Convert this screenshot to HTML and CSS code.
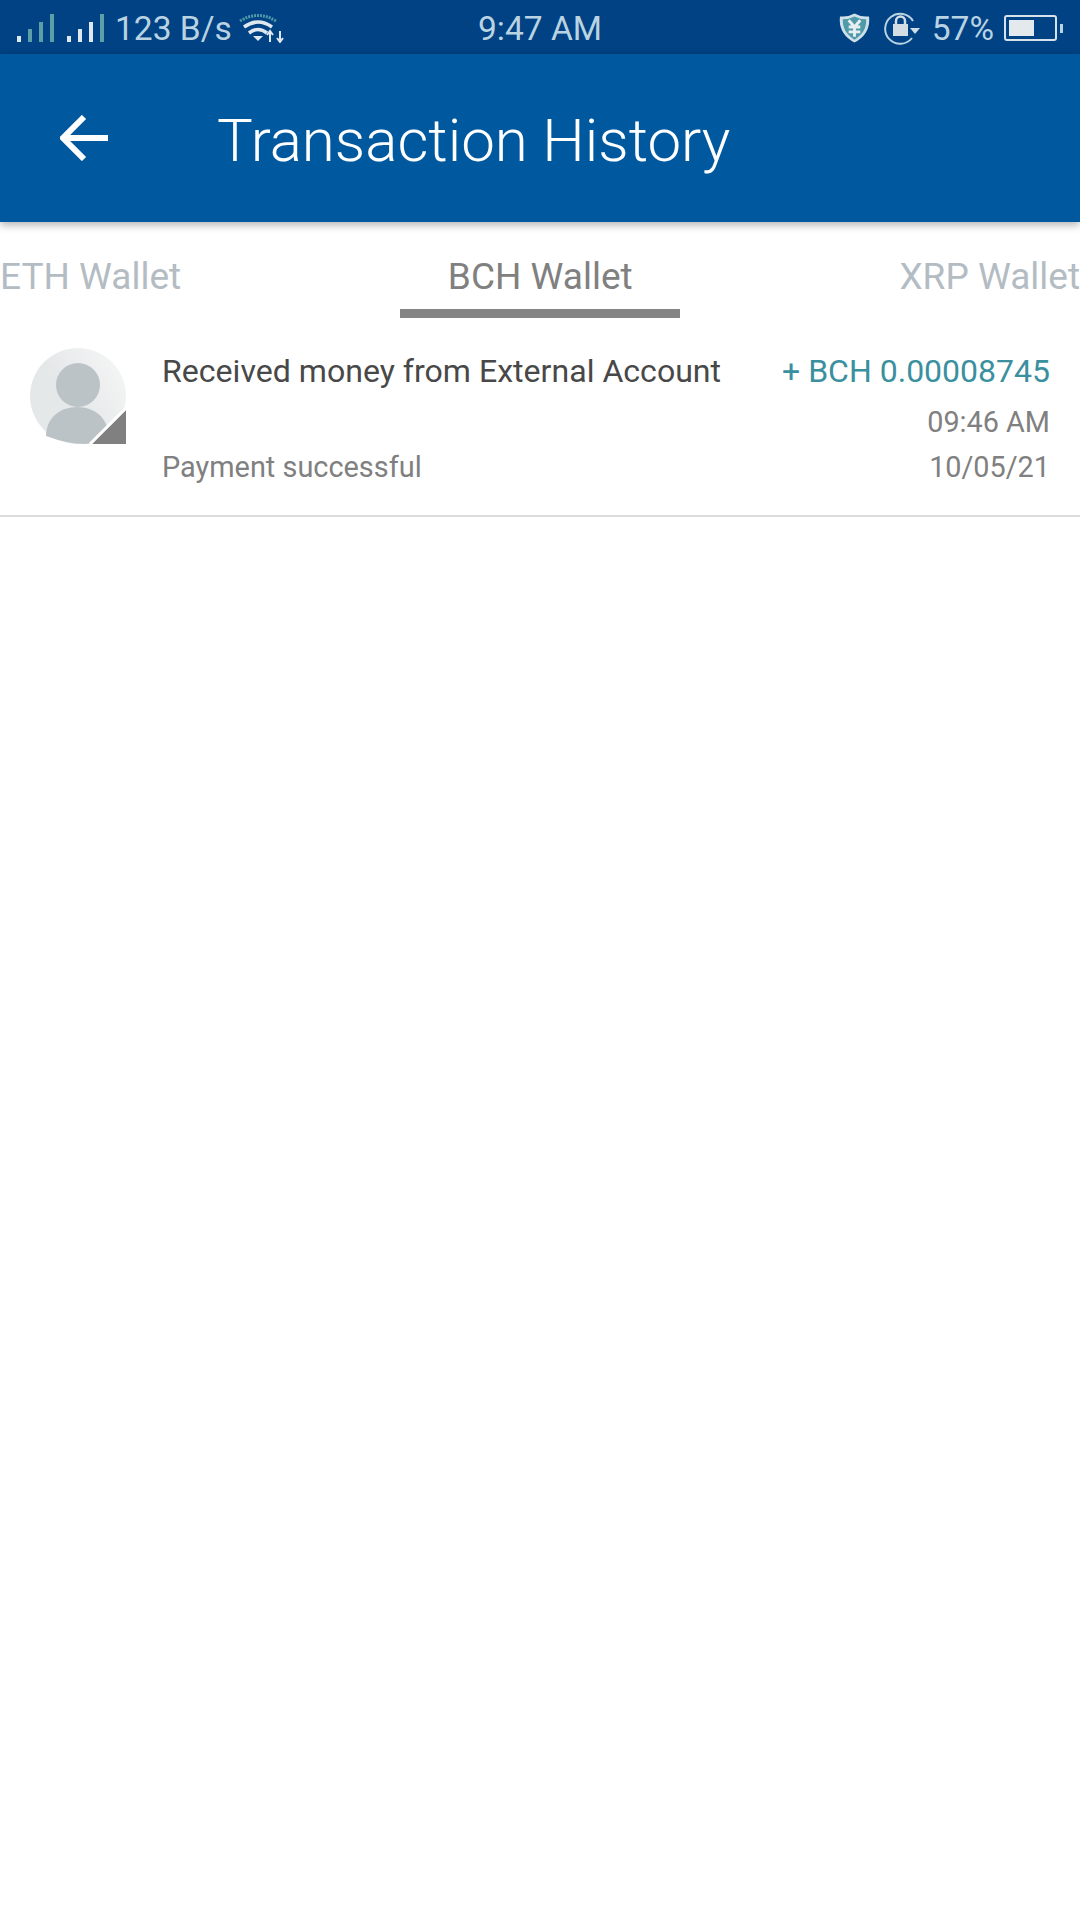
FILE: index.html
```html
<!DOCTYPE html>
<html lang="en">
<head>
    <meta charset="UTF-8">
    <meta name="viewport" content="width=device-width, initial-scale=1.0">
    <title>Transaction History</title>
    <link rel="stylesheet" href="styles.css">
</head>
<body>
    <div class="status-bar">
        <div class="status-left">
            <svg class="signal" width="38" height="30" viewBox="0 0 38 30">
                <rect x="0" y="23" width="4" height="6" fill="#dfe8f0"/>
                <rect x="11" y="16" width="4" height="13" fill="#5d9fa8"/>
                <rect x="22" y="9" width="4" height="20" fill="#5d9fa8"/>
                <rect x="33" y="1" width="4" height="28" fill="#5d9fa8"/>
            </svg>
            <svg class="signal second" width="38" height="30" viewBox="0 0 38 30">
                <rect x="0" y="23" width="4" height="6" fill="#dfe8f0"/>
                <rect x="11" y="16" width="4" height="13" fill="#dfe8f0"/>
                <rect x="22" y="9" width="4" height="20" fill="#dfe8f0"/>
                <rect x="33" y="1" width="4" height="28" fill="#5d9fa8"/>
            </svg>
            <span class="speed">123 B/s</span>
            <svg class="wifi" width="46" height="30" viewBox="0 0 46 30">
                <path d="M1 8 Q19 -3 37 8" fill="none" stroke="#4f9aa8" stroke-width="3" stroke-dasharray="2 1"/>
                <path d="M5 14 Q19 4 33 14" fill="none" stroke="#dfe8f0" stroke-width="3.5"/>
                <path d="M10 20 Q19 13 28 20" fill="none" stroke="#dfe8f0" stroke-width="3.5"/>
                <path d="M14 23 L24 23 L19 28 Z" fill="#dfe8f0"/>
                <path d="M31 29 V19 M28 22 L31 18 L34 22" fill="none" stroke="#dfe8f0" stroke-width="2"/>
                <path d="M41 18 V28 M38 25 L41 29 L44 25" fill="none" stroke="#dfe8f0" stroke-width="2"/>
            </svg>
        </div>
        <div class="status-time">9:47 AM</div>
        <div class="status-right">
            <svg class="shield" width="31" height="32" viewBox="0 0 32 32">
                <path d="M16 1 Q23 5 31 4 Q33 22 16 31 Q-1 22 1 4 Q9 5 16 1 Z" fill="#cfe0e8"/>
                <path d="M16 4 Q22 7 28 7 Q29 20 16 28 Q3 20 4 7 Q10 7 16 4 Z" fill="#4f9aa8"/>
                <path d="M10 8 L16 15 L22 8 M16 15 V25 M10 15 H22 M10 20 H22" fill="none" stroke="#e8eef2" stroke-width="3"/>
            </svg>
            <svg class="lock" width="36" height="34" viewBox="0 0 36 34">
                <path d="M29 10 A15 15 0 1 0 28 27" fill="none" stroke="#b9d3e2" stroke-width="2"/>
                <path d="M26 17 H36 L31 23 Z" fill="#cfdde6"/>
                <rect x="9" y="13" width="15" height="12" fill="#d5dde4"/>
                <path d="M12 13 V10 A4.5 4.5 0 0 1 21 10 V13" fill="none" stroke="#d5dde4" stroke-width="2.5"/>
            </svg>
            <span class="battery-text">57%</span>
            <div class="battery">
                <div class="battery-level"></div>
            </div>
            <div class="battery-tip"></div>
        </div>
    </div>

    <div class="app-bar">
        <svg class="back" width="50" height="46" viewBox="0 0 50 46">
            <path d="M24 2 L3 23 L24 44 M3 23 H48" fill="none" stroke="#fff" stroke-width="6"/>
        </svg>
        <h1 class="title">Transaction History</h1>
    </div>

    <div class="tabs">
        <div class="tab">ETH Wallet</div>
        <div class="tab active">BCH Wallet</div>
        <div class="tab">XRP Wallet</div>
    </div>

    <div class="row">
        <div class="avatar">
            <svg width="96" height="96" viewBox="0 0 96 96">
                <defs>
                    <linearGradient id="sheen" x1="0.4" y1="0.5" x2="1" y2="0.1">
                        <stop offset="0" stop-color="#e5e8e9"/>
                        <stop offset="1" stop-color="#f6f7f7"/>
                    </linearGradient>
                </defs>
                <circle cx="48" cy="48" r="48" fill="url(#sheen)"/>
                <circle cx="48" cy="37" r="22" fill="#bcc3c7"/>
                <path d="M16 88 C16 70 30 59 47 59 C64 59 78 70 78 86 L70 94 Q48 100 16 88 Z" fill="#bcc3c7"/>
                <path d="M62 96 L96 62 V96 Z" fill="#808080"/>
                <path d="M60 96 L96 60" stroke="#fff" stroke-width="3"/>
            </svg>
        </div>
        <div class="row-main">
            <div class="row-title">Received money from External Account</div>
            <div class="row-status">Payment successful</div>
        </div>
        <div class="row-side">
            <div class="amount">+ BCH 0.00008745</div>
            <div class="row-time">09:46 AM</div>
            <div class="row-date">10/05/21</div>
        </div>
    </div>
</body>
</html>
```

FILE: styles.css
```css
* {
    box-sizing: border-box;
}
body {
    margin: 0;
    width: 1080px;
    height: 1920px;
    overflow: hidden;
    background: #fff;
    font-family: Roboto, "Liberation Sans", sans-serif;
}
.status-bar {
    height: 54px;
    background: #004283;
    color: #b9d3e2;
    display: grid;
    grid-template-columns: 1fr auto 1fr;
    align-items: center;
    font-size: 33.5px;
    padding-top: 2px;
}
.status-left {
    display: flex;
    align-items: center;
    padding-left: 17px;
}
.signal.second {
    margin-left: 12px;
}
.speed {
    margin-left: 10px;
}
.wifi {
    margin-left: 7px;
}
.status-right {
    display: flex;
    align-items: center;
    justify-content: flex-end;
    padding-right: 17px;
}
.lock {
    margin-left: 14px;
}
.battery-text {
    margin-left: 12px;
}
.battery {
    width: 53px;
    height: 26px;
    margin-left: 10px;
    padding: 3px;
    border: 2px solid #d8e2ea;
    border-radius: 3px;
}
.battery-level {
    width: 57%;
    height: 100%;
    background: #e4e9ed;
}
.battery-tip {
    width: 3px;
    height: 9px;
    margin-left: 3px;
    background: #b9d3e2;
}
.app-bar {
    height: 168px;
    background: #00589f;
    display: flex;
    align-items: center;
    padding-left: 60px;
    box-shadow: 0 3px 8px rgba(0, 0, 0, 0.3);
    position: relative;
}
.title {
    margin: 4px 0 0 107px;
    font-size: 60px;
    font-weight: 300;
    color: #fff;
}
.tabs {
    display: flex;
    justify-content: space-between;
    align-items: flex-start;
    height: 96px;
}
.tab {
    font-size: 37px;
    color: #b4bcc3;
    padding-top: 33px;
    height: 96px;
    white-space: nowrap;
}
.tab.active {
    width: 280px;
    text-align: center;
    color: #808080;
    border-bottom: 9px solid #858585;
}
.row {
    display: flex;
    height: 199px;
    padding: 30px 30px 0;
    border-bottom: 2px solid #dcdcdc;
}
.avatar {
    width: 96px;
    height: 96px;
    margin-right: 36px;
}
.row-main {
    flex: 1;
}
.row-title {
    font-size: 32.1px;
    color: #484848;
    margin-top: 4px;
}
.row-status {
    font-size: 28.9px;
    color: #808080;
    margin-top: 60px;
}
.row-side {
    text-align: right;
    font-size: 28.8px;
    color: #808080;
}
.amount {
    font-size: 32px;
    color: #3a909e;
    margin-top: 4px;
}
.row-time {
    margin-top: 15px;
}
.row-date {
    margin-top: 11px;
}
```
